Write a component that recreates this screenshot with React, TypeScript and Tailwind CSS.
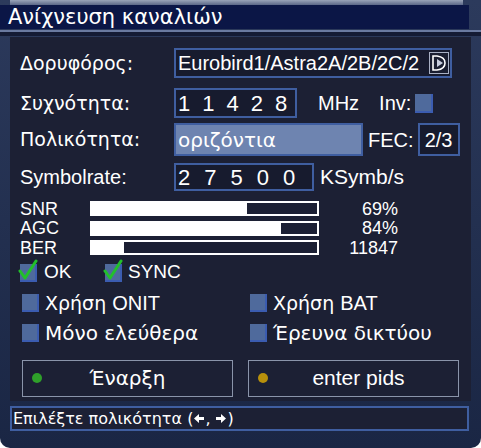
import React from 'react';

const Check = ({ checked = false }: { checked?: boolean }) => (
  <div className="relative w-[17px] h-[18px] bg-[#4f6a9c] border-r-2 border-b-2 border-[#3b5cb0] shrink-0">
    {checked && (
      <svg className="absolute -left-[3px] -top-[5px]" width="22" height="22" viewBox="0 0 22 22">
        <path d="M3 12 L8 19 L19 2" stroke="#22c02a" strokeWidth="3" fill="none" strokeLinecap="round" strokeLinejoin="round" />
      </svg>
    )}
  </div>
);

const Bar = ({ pct }: { pct: number }) => (
  <div className="w-[229px] h-[15px] border-2 border-white bg-[#1c2034]">
    <div className="h-full bg-white" style={{ width: `${pct}%` }} />
  </div>
);

const Arrow = ({ dir }: { dir: 'l' | 'r' }) => (
  <svg width="10" height="9" viewBox="0 0 10 9" className="inline-block mx-[1px]">
    {dir === 'l' ? <path d="M0 4.5 L5 0 L5 3 L10 3 L10 6 L5 6 L5 9 Z" fill="#fff" /> : <path d="M10 4.5 L5 0 L5 3 L0 3 L0 6 L5 6 L5 9 Z" fill="#fff" />}
  </svg>
);

const App = () => {
  const signals = [
    { label: 'SNR', pct: 69, value: '69%' },
    { label: 'AGC', pct: 84, value: '84%' },
    { label: 'BER', pct: 14, value: '11847' },
  ];

  return (
    <div
      className="w-[481px] h-[448px] bg-gradient-to-b from-[#2c3a5c] to-[#1a2644] text-white overflow-hidden rounded-b-[10px] flex flex-col"
      style={{ fontFamily: '"Liberation Sans", Arial, sans-serif' }}
    >
      {/* Title */}
      <div className="h-[5px] bg-gradient-to-b from-[#9aa4b8] to-[#5c6888] mr-[18px] ml-[10px]" />
      <div className="h-[24px] bg-[#0b1646] mr-[12px] flex items-center pl-[8px]">
        <span className="text-[21px] leading-none font-['DejaVu_Sans',sans-serif]">Ανίχνευση καναλιών</span>
      </div>
      <div className="h-[2px] bg-[#6a7aa0] mt-[1px]" />
      <div className="h-[4px] bg-[#141b34]" />

      {/* Body */}
      <div className="mx-[10px] mt-[1px] h-[364px] bg-[#1c2034] px-[10px] pt-[11px] flex flex-col">
        <div className="flex items-center h-[30px]">
          <span className="w-[154px] text-[19px] font-['DejaVu_Sans',sans-serif]">Δορυφόρος:</span>
          <div className="w-[278px] h-[30px] border-2 border-[#3f5ea0] bg-[#171b2e] flex items-center pl-[2px] overflow-hidden">
            <span className="text-[20px] whitespace-nowrap flex-1 overflow-hidden">Eurobird1/Astra2A/2B/2C/2</span>
            <div className="w-[20px] h-[22px] border border-[#a8b0c4] bg-[#1a1e30] flex items-center justify-center shrink-0 mr-[1px]">
              <svg width="14" height="16" viewBox="0 0 14 16">
                <path d="M1 1 L1 15 L5 15 Q13 14 13 8 Q13 2 5 1 Z" fill="none" stroke="#ffffff" strokeWidth="1.6" />
                <path d="M5 4 L11 8 L5 12 Z" fill="#c8cede" />
              </svg>
            </div>
          </div>
        </div>

        <div className="flex items-center h-[30px] mt-[10px]">
          <span className="w-[154px] text-[19px] font-['DejaVu_Sans',sans-serif]">Συχνότητα:</span>
          <div className="w-[123px] h-[30px] border-2 border-[#3f5ea0] bg-[#171b2e] flex items-center pl-[2px] gap-[12px] text-[22px]">
            <span>1</span><span>1</span><span>4</span><span>2</span><span>8</span>
          </div>
          <span className="ml-[21px] text-[20px]">MHz</span>
          <span className="ml-[20px] text-[20px]">Inv:</span>
          <div className="ml-[4px] w-[18px] h-[19px] bg-[#4f6a9c] border-r-2 border-b-2 border-[#3b5cb0]" />
        </div>

        <div className="flex items-center h-[33px] mt-[5px]">
          <span className="w-[154px] text-[19px] font-['DejaVu_Sans',sans-serif]">Πολικότητα:</span>
          <div className="w-[189px] h-[33px] border-2 border-[#3f5ea0] bg-[#6e84b0] flex items-center pl-[2px] text-[20px] font-['DejaVu_Sans',sans-serif]">
            οριζόντια
          </div>
          <span className="ml-[5px] text-[20px]">FEC:</span>
          <div className="ml-[4px] w-[42px] h-[33px] border-2 border-[#3f5ea0] bg-[#171b2e] flex items-center justify-center text-[20px]">
            2/3
          </div>
        </div>

        <div className="flex items-center h-[28px] mt-[7px]">
          <span className="w-[154px] text-[20px]">Symbolrate:</span>
          <div className="w-[140px] h-[28px] border-2 border-[#3f5ea0] bg-[#171b2e] flex items-center pl-[2px] gap-[14px] text-[22px]">
            <span>2</span><span>7</span><span>5</span><span>0</span><span>0</span>
          </div>
          <span className="ml-[6px] text-[21px]">KSymb/s</span>
        </div>

        <div className="flex flex-col mt-[8px] leading-none">
          {signals.map((s) => (
            <div key={s.label} className="flex items-center h-[19.5px]">
              <span className="w-[70px] text-[18px]">{s.label}</span>
              <Bar pct={s.pct} />
              <span className="w-[79px] text-right text-[18px]">{s.value}</span>
            </div>
          ))}
        </div>

        <div className="flex items-center h-[20px] mt-[5px] text-[19px]">
          <Check checked />
          <span className="ml-[7px] w-[61px]">OK</span>
          <Check checked />
          <span className="ml-[6px]">SYNC</span>
        </div>

        <div className="grid grid-cols-[230px_1fr] gap-y-[10px] mt-[10px] text-[19px] font-['DejaVu_Sans',sans-serif]">
          <div className="flex items-center h-[20px] pl-[2px]">
            <Check />
            <span className="ml-[6px]">Χρήση <span className="font-['Liberation_Sans',sans-serif] text-[20px]">ONIT</span></span>
          </div>
          <div className="flex items-center h-[20px]">
            <Check />
            <span className="ml-[6px]">Χρήση <span className="font-['Liberation_Sans',sans-serif] text-[20px]">BAT</span></span>
          </div>
          <div className="flex items-center h-[20px] pl-[2px]">
            <Check />
            <span className="ml-[6px] text-[20px]">Μόνο ελεύθερα</span>
          </div>
          <div className="flex items-center h-[20px]">
            <Check />
            <span className="ml-[6px] text-[20px]">Έρευνα δικτύου</span>
          </div>
        </div>

        <div className="flex gap-[15px] mt-[17px] pl-[2px]">
          <div className="w-[211px] h-[37px] border border-[#8a94aa] flex items-center px-[9px] text-[20px] font-['DejaVu_Sans',sans-serif]">
            <span className="w-[10px] h-[10px] rounded-full bg-[#2fa02a]" />
            <span className="flex-1 text-center pr-[10px]">Έναρξη</span>
          </div>
          <div className="w-[211px] h-[37px] border border-[#8a94aa] flex items-center px-[9px] text-[21px]">
            <span className="w-[10px] h-[10px] rounded-full bg-[#b8900c]" />
            <span className="flex-1 text-center">enter pids</span>
          </div>
        </div>
      </div>

      {/* Status */}
      <div className="mx-[10px] mt-[5px] mr-[12px] h-[25px] border-2 border-[#3f5ea0] bg-[#1c2034] flex items-center pl-[1px] text-[16px] font-['DejaVu_Sans',sans-serif]">
        <span>Επιλέξτε πολικότητα (</span>
        <Arrow dir="l" />
        <span>,</span>
        <span className="ml-[5px]" />
        <Arrow dir="r" />
        <span>)</span>
      </div>
    </div>
  );
};

export default App;
